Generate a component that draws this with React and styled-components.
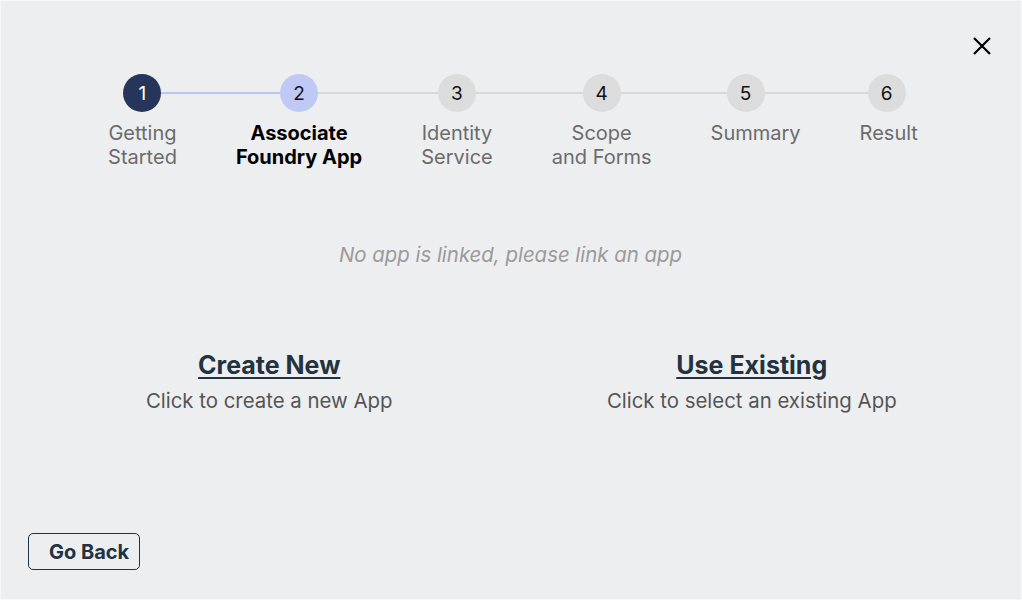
import React from 'react';
import styled, { createGlobalStyle } from 'styled-components';

const GlobalStyle = createGlobalStyle`
  html, body {
    margin: 0;
    padding: 0;
    background: #edeef0;
  }
  * {
    box-sizing: border-box;
  }
`;

const Page = styled.div`
  width: 1022px;
  height: 600px;
  display: flex;
  flex-direction: column;
  background: #edeef0;
  border: 1px solid #f6f7f8;
  font-family: Inter, "Liberation Sans", sans-serif;
  padding: 31px 28px 29px 27px;
`;

const TopBar = styled.div`
  display: flex;
  justify-content: flex-end;
  height: 28px;
`;

const CloseButton = styled.button`
  width: 28px;
  height: 28px;
  padding: 0;
  margin-right: -3px;
  border: none;
  background: transparent;
  display: flex;
  align-items: center;
  justify-content: center;
  cursor: pointer;
`;

const Stepper = styled.ol`
  position: relative;
  align-self: center;
  display: flex;
  gap: 59px;
  list-style: none;
  margin: 14px 0 0 5px;
  padding: 0;
`;

const Track = styled.div`
  position: absolute;
  top: 18px;
  left: 35px;
  right: 32px;
  height: 2px;
  background: #d8d8d8;
`;

const Progress = styled.div`
  position: absolute;
  top: 18px;
  left: 35px;
  width: 157px;
  height: 2px;
  background: #b9c5f3;
`;

const Step = styled.li`
  position: relative;
  display: flex;
  flex-direction: column;
  align-items: center;
`;

const Circle = styled.span`
  width: 38px;
  height: 38px;
  margin-right: ${p => p.$shift * 2}px;
  border-radius: 50%;
  display: flex;
  align-items: center;
  justify-content: center;
  font-size: 19px;
  background: ${p => (p.$state === 'done' ? '#26355a' : p.$state === 'current' ? '#c0c9f5' : '#dcdcdc')};
  color: ${p => (p.$state === 'done' ? '#ffffff' : '#111111')};
`;

const StepLabel = styled.span`
  margin-top: 9px;
  font-size: 20px;
  line-height: 24px;
  text-align: center;
  white-space: nowrap;
  color: ${p => (p.$current ? '#000000' : '#6b6b6b')};
  font-weight: ${p => (p.$current ? 700 : 400)};
`;

const Message = styled.p`
  margin: 73px 0 0;
  text-align: center;
  font-style: italic;
  font-size: 20.4px;
  color: #9a9a9a;
`;

const Options = styled.div`
  display: grid;
  grid-template-columns: 1fr 1fr;
  margin-top: 83px;
`;

const Option = styled.div`
  display: flex;
  flex-direction: column;
  align-items: center;
`;

const OptionTitle = styled.a`
  font-size: 25px;
  font-weight: 700;
  line-height: 30px;
  color: #233241;
  text-decoration: underline;
  text-underline-offset: 3px;
  text-decoration-thickness: 2px;
  cursor: pointer;
`;

const OptionText = styled.span`
  margin-top: 9px;
  font-size: 20.4px;
  line-height: 24px;
  color: #555555;
`;

const Footer = styled.div`
  margin-top: auto;
  display: flex;
`;

const BackButton = styled.button`
  height: 37px;
  padding: 0 10px 0 20px;
  border: 1px solid #233241;
  border-radius: 5px;
  background: transparent;
  font-family: Inter, "Liberation Sans", sans-serif;
  font-size: 20px;
  font-weight: 700;
  color: #233241;
  cursor: pointer;
`;

const steps = [
  { lines: ['Getting', 'Started'], shift: 0 },
  { lines: ['Associate', 'Foundry App'], shift: 0 },
  { lines: ['Identity', 'Service'], shift: 0 },
  { lines: ['Scope', 'and Forms'], shift: 0 },
  { lines: ['Summary'], shift: 10 },
  { lines: ['Result'], shift: 2 },
];

const current = 1;

export default function App() {
  return (
    <>
      <GlobalStyle />
      <Page>
        <TopBar>
          <CloseButton aria-label="Close">
            <svg width="20" height="20" viewBox="0 0 20 20">
              <path d="M2 2 L18 18 M18 2 L2 18" stroke="#000" strokeWidth="2.2" />
            </svg>
          </CloseButton>
        </TopBar>
        <Stepper>
          <Track />
          <Progress />
          {steps.map((step, i) => {
            const state = i < current ? 'done' : i === current ? 'current' : 'todo';
            return (
              <Step key={i}>
                <Circle $state={state} $shift={step.shift}>{i + 1}</Circle>
                <StepLabel $current={i === current}>
                  {step.lines.map((l, j) => (
                    <React.Fragment key={j}>
                      {j > 0 && <br />}
                      {l}
                    </React.Fragment>
                  ))}
                </StepLabel>
              </Step>
            );
          })}
        </Stepper>
        <Message>No app is linked, please link an app</Message>
        <Options>
          <Option>
            <OptionTitle>Create New</OptionTitle>
            <OptionText>Click to create a new App</OptionText>
          </Option>
          <Option>
            <OptionTitle>Use Existing</OptionTitle>
            <OptionText>Click to select an existing App</OptionText>
          </Option>
        </Options>
        <Footer>
          <BackButton>Go Back</BackButton>
        </Footer>
      </Page>
    </>
  );
}
